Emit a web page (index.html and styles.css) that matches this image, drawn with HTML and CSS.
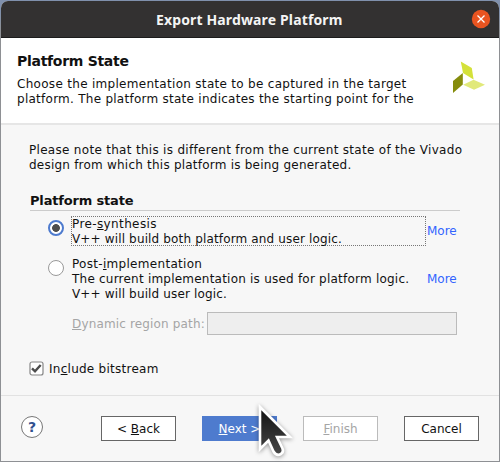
FILE: index.html
```html
<!DOCTYPE html>
<html lang="en">
<head>
<meta charset="utf-8">
<title>Export Hardware Platform</title>
<link rel="stylesheet" href="styles.css">
</head>
<body>
<div class="dialog">
  <header class="titlebar">
    <h1>Export Hardware Platform</h1>
    <button class="close" aria-label="Close"><svg width="20" height="20" viewBox="0 0 20 20"><circle cx="10" cy="10" r="9.2" fill="#e95420"/><path d="M6.5 6.5l7 7M13.5 6.5l-7 7" stroke="#fff" stroke-width="1.3"/></svg></button>
  </header>
  <section class="intro">
    <div class="intro-text">
      <h2>Platform State</h2>
      <p><span class="line wider">Choose the implementation state to be captured in the target</span><br><span class="line wide">platform. The platform state indicates the starting point for the</span></p>
    </div>
    <svg class="logo" width="33" height="34" viewBox="0 0 33 34"><path fill="#d4e13a" d="M7.800 .5L18.800 7l1.800 11.500L10 12z"/><path fill="#858c0c" d="M0 20l9.800-8v11.500L0 32z"/><path fill="#e1e97a" d="M10.200 23.700l10.300-5 11.500 5-11 5z"/></svg>
  </section>
  <main class="content">
    <p class="note"><span class="line wider">Please note that this is different from the current state of the Vivado</span><br><span class="line medium">design from which this platform is being generated.</span></p>
    <h3>Platform state</h3>
    <div class="option first">
      <span class="radio selected"></span>
      <div class="label focus"><span class="line widest">Pre-<u>s</u>ynthesis</span><br><span class="line narrow">V++ will build both platform and user logic.</span></div>
      <a class="more">More</a>
    </div>
    <div class="option second">
      <span class="radio"></span>
      <div class="label"><span class="line wider">Post-<u>i</u>mplementation</span><br><span class="line medium">The current implementation is used for platform logic.</span><br><span class="line narrow">V++ will build user logic.</span></div>
      <a class="more">More</a>
    </div>
    <div class="path-row"><label class="narrow"><u>D</u>ynamic region path:</label><span class="field"></span></div>
    <div class="check-row"><svg width="15" height="15" viewBox="0 0 15 15"><rect x="1" y="1" width="13" height="13" rx="2" fill="#fff" stroke="#858585" stroke-width="1.2"/><path d="M3 7.300l3 3 5.700-6.300" fill="none" stroke="#4d4d4d" stroke-width="2.400"/></svg><span class="wide">In<u>c</u>lude bitstream</span></div>
  </main>
  <footer class="actions">
    <span class="help">?</span>
    <button class="btn">&lt; <u>B</u>ack</button>
    <button class="btn primary"><u>N</u>ext &gt;</button>
    <button class="btn disabled"><u>F</u>inish</button>
    <button class="btn">Cancel</button>
  </footer>
</div>
<svg class="cursor" width="40" height="60" viewBox="0 0 40 60"><defs><linearGradient id="g" x1="0" y1="0" x2="0" y2="1"><stop offset="0" stop-color="#111"/><stop offset="1" stop-color="#484848"/></linearGradient></defs><path d="M5 6v42l8.500-8.500 5 11q3 5 7.500 2.500 3-2 1.500-5.500L22 36h13z" fill="url(#g)" stroke="#fff" stroke-width="2.600"/></svg>
</body>
</html>
```
FILE: styles.css
```css
* { box-sizing: border-box; }
body {
  margin: 0;
  width: 500px;
  height: 462px;
  overflow: hidden;
  padding: 1px 1px 0;
  background: linear-gradient(#8090ac 12px, #8e9094 30px);
  font: 12px/15px "DejaVu Sans", sans-serif;
  color: #111;
}
h1, h2, h3, p { margin: 0; }
u { text-decoration-thickness: 1px; text-underline-offset: 1px; text-decoration-skip-ink: none; }
.line { white-space: nowrap; }
.narrow { letter-spacing: .15px; }
.medium { letter-spacing: .22px; }
.wide { letter-spacing: .26px; }
.wider { letter-spacing: .3px; }
.widest { letter-spacing: .38px; }
.dialog {
  display: flex;
  flex-direction: column;
  width: 498px;
  height: 460px;
  background: #f7f7f7;
  border-radius: 7px 7px 0 0;
  overflow: hidden;
}
.titlebar {
  display: flex;
  align-items: center;
  height: 37px;
  flex: none;
  padding: 0 8px 0 155px;
  background: #333131;
  border-bottom: 1px solid #1c1c1c;
}
h1 {
  flex: 1;
  padding-top: 1px;
  font: bold 14px/20px "Noto Sans", sans-serif;
  letter-spacing: .14px;
  color: #f4f4f4;
  white-space: nowrap;
}
.close { padding: 0; border: 0; background: none; width: 20px; height: 20px; }
.close svg, .logo { display: block; }
.intro {
  display: flex;
  height: 87px;
  flex: none;
  padding: 14px 0 0 16px;
  background: #fff;
  border-bottom: 2px solid #e6e6e6;
}
.intro-text { width: 436px; }
h2 { font-size: 14px; line-height: 18px; margin-bottom: 7px; letter-spacing: -.29px; }
.logo { margin-top: 9px; }
.content { height: 270px; flex: none; padding: 18px 0 0 28px; }
h3 {
  width: 430px;
  height: 19px;
  margin: 19px 0 0 1px;
  padding-top: 1px;
  border-bottom: 1px solid #ccc;
  font-size: 13px;
  line-height: 16px;
  letter-spacing: -.17px;
}
.option { display: flex; padding-left: 19px; }
.first { margin-top: 5px; }
.second { margin-top: 10px; }
.radio {
  flex: none;
  width: 16px;
  height: 16px;
  margin: 4px 7px 0 0;
  border: 1px solid #999;
  border-radius: 50%;
  background: #fff;
}
.selected {
  border: 2px solid #4e7bce;
  background: radial-gradient(circle, #4d4d4d 3.5px, #fff 4.300px);
}
.label { width: 355px; padding: 1px; }
.focus { height: 30px; padding: 0; border: 1px dotted #777; line-height: 15px; }
.more { color: #3264ff; margin: 8px 0 0 1px; }
.second .more { margin-top: 16px; }
.path-row { display: flex; margin: 9px 0 0 43px; color: #a5a5a5; }
.path-row label { width: 135px; padding-top: 5px; white-space: nowrap; }
.field { width: 250px; height: 23px; background: #eee; border: 1px solid #bbb; }
.check-row { display: flex; gap: 5px; margin-top: 26px; }
.check-row span { padding-top: 1px; }
.actions {
  display: flex;
  flex: 1;
  padding: 20px 0 0 20px;
  border-top: 1px solid #e2e2e2;
}
.help {
  flex: none;
  width: 22px;
  height: 22px;
  margin-right: 58px;
  border: 1px solid #777;
  border-radius: 50%;
  background: #fff;
  color: #31508f;
  font-weight: bold;
  font-size: 14px;
  line-height: 20px;
  text-align: center;
}
.btn {
  flex: none;
  width: 75px;
  height: 25px;
  margin-right: 26px;
  padding: 2px 0 0;
  border: 1px solid #666;
  background: #fff;
  font: inherit;
  color: #111;
}
.primary { border-color: #4e7bce; background: #4e7bce; color: #fff; }
.disabled { border-color: #bbb; color: #a5a5a5; }
.cursor { position: absolute; left: 255px; top: 401px; filter: drop-shadow(0 1px 2px #0006); }
```
